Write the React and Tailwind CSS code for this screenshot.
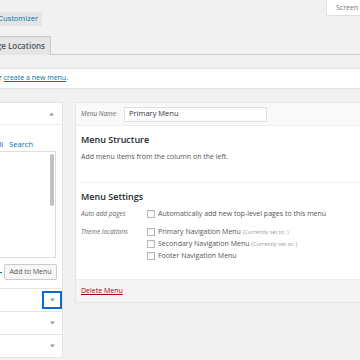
import React from 'react';

const font = { fontFamily: '"Open Sans", "Noto Sans", sans-serif' };

function Check() {
  return <span className="w-[8px] h-[8px] border border-[#b4b9be] bg-white shrink-0 shadow-[inset_0_1px_1px_rgba(0,0,0,0.08)]" />;
}

function Caret({ up }) {
  return (
    <svg width="5" height="4" viewBox="0 0 10 6" className="text-[#999]">
      <path d={up ? 'M0 6 L5 0 L10 6 Z' : 'M0 0 L10 0 L5 6 Z'} fill="currentColor" />
    </svg>
  );
}

function AccordionRow({ focused }) {
  return (
    <div className="h-[23px] border-b border-[#e5e5e5] flex items-center justify-end">
      {focused ? (
        <div className="w-[20px] h-[18px] border-2 border-[#0b6ad8] flex items-center justify-center">
          <Caret />
        </div>
      ) : (
        <div className="w-[20px] flex items-center justify-center"><Caret /></div>
      )}
    </div>
  );
}

export default function App() {
  return (
    <div className="w-[360px] h-[360px] overflow-hidden bg-[#f1f1f1] text-[#23282d]" style={font}>
      {/* top strip */}
      <div className="flex h-[26px]">
        <div className="w-[42px] mt-[12px] h-[14px] bg-[#e5e5e5] flex justify-end items-center pr-[4px]">
          <span className="whitespace-nowrap text-[7.5px] font-medium text-[#0073aa]">Manage with Customizer</span>
        </div>
        <div className="ml-auto w-[34px] h-[16px] bg-white border-l border-b border-[#e1e1e1] pl-[9px] pt-[2px] flex items-center overflow-hidden">
          <span className="whitespace-nowrap text-[7px] text-[#72777c]">Screen Options</span>
        </div>
      </div>

      {/* tabs */}
      <div className="mt-[10px] h-[19px] border-b border-[#ccc] flex">
        <div className="w-[51px] h-[19px] bg-[#e5e5e5] border-r border-t border-[#ccc] flex justify-end items-center pr-[5px]">
          <span className="whitespace-nowrap text-[8px] font-semibold text-[#50575e]">Manage Locations</span>
        </div>
      </div>

      {/* notice */}
      <div className="mt-[13px] h-[21px] bg-white border-y border-[#e5e5e5] flex items-center">
        <div className="w-[68px] flex justify-end">
          <span className="whitespace-nowrap text-[7px] text-[#444]">
            Edit your menu below, or <span className="text-[#0073aa] underline">create a new menu</span>.
          </span>
        </div>
      </div>

      {/* panels */}
      <div className="mt-[13px] flex gap-[12px] items-start">
        {/* left */}
        <div className="w-[63px] shrink-0 bg-white border-r border-t border-[#e5e5e5]">
          <div className="h-[22px] border-b border-[#eee] flex items-center justify-end pr-[8px]">
            <Caret up />
          </div>
          <div className="border-b border-[#e5e5e5]">
            <div className="mt-[15px] h-[10px] w-[33px] flex justify-end items-center">
              <span className="whitespace-nowrap text-[7.5px] text-[#0073aa]">
                View All<span className="ml-[6px]">Search</span>
              </span>
            </div>
            <div className="mt-[1px] w-[56px] h-[107px] border border-[#ddd] border-l-0 flex justify-end pt-[2px] pr-[1px]">
              <div className="w-[4px] h-[52px] bg-[#c1c1c1] rounded-[2px]" />
            </div>
            <div className="flex items-center mt-[6px] mb-[8px]">
              <span className="w-[2px] h-[1px] bg-[#0073aa]" />
              <div className="ml-[2px] w-[53px] h-[16px] bg-[#f7f7f7] border border-[#ccc] rounded-[2px] flex items-center justify-center">
                <span className="text-[7px] text-[#555] whitespace-nowrap">Add to Menu</span>
              </div>
            </div>
          </div>
          <AccordionRow focused />
          <AccordionRow />
          <AccordionRow />
        </div>

        {/* right */}
        <div className="flex-1 bg-white border border-r-0 border-[#e5e5e5]">
          <div className="h-[23px] bg-[#f9f9f9] border-b border-[#eee] flex items-center pl-[5px]">
            <span className="w-[43px] text-[6.5px] italic text-[#666]">Menu Name</span>
            <div className="w-[143px] h-[15px] bg-white border border-[#e0e0e0] flex items-center pl-[4px]">
              <span className="text-[7.5px] text-[#32373c]">Primary Menu</span>
            </div>
          </div>
          <div className="pl-[5px]">
            <div className="pt-[7px] text-[9px] leading-[13px] font-semibold text-[#23282d]">Menu Structure</div>
            <div className="mt-[6px] text-[7px] leading-[9px] text-[#555]">Add menu items from the column on the left.</div>
            <div className="mt-[21px] border-t border-[#eee]" />
            <div className="mt-[7px] text-[9px] leading-[13px] font-semibold text-[#23282d]">Menu Settings</div>
            <div className="mt-[5px] flex items-center h-[12px]">
              <span className="w-[66px] text-[6.5px] italic text-[#666]">Auto add pages</span>
              <Check />
              <span className="ml-[3px] text-[7px] text-[#555] whitespace-nowrap">Automatically add new top-level pages to this menu</span>
            </div>
            <div className="mt-[6px] flex items-start">
              <span className="w-[66px] text-[6.5px] italic text-[#666] leading-[12px]">Theme locations</span>
              <div className="flex flex-col">
                <div className="flex items-center h-[12px]">
                  <Check />
                  <span className="ml-[3px] text-[7px] text-[#555] whitespace-nowrap">Primary Navigation Menu <span className="text-[5.5px] text-[#999]">(Currently set to: )</span></span>
                </div>
                <div className="flex items-center h-[12px]">
                  <Check />
                  <span className="ml-[3px] text-[7px] text-[#555] whitespace-nowrap">Secondary Navigation Menu <span className="text-[5.5px] text-[#999]">(Currently set to: )</span></span>
                </div>
                <div className="flex items-center h-[12px]">
                  <Check />
                  <span className="ml-[3px] text-[7px] text-[#555] whitespace-nowrap">Footer Navigation Menu</span>
                </div>
              </div>
            </div>
            <div className="h-[17px]" />
          </div>
          <div className="h-[23px] bg-[#f5f5f5] border-t border-[#eee] flex items-center pl-[5px]">
            <span className="text-[7px] text-[#a00] underline">Delete Menu</span>
          </div>
        </div>
      </div>
    </div>
  );
}
